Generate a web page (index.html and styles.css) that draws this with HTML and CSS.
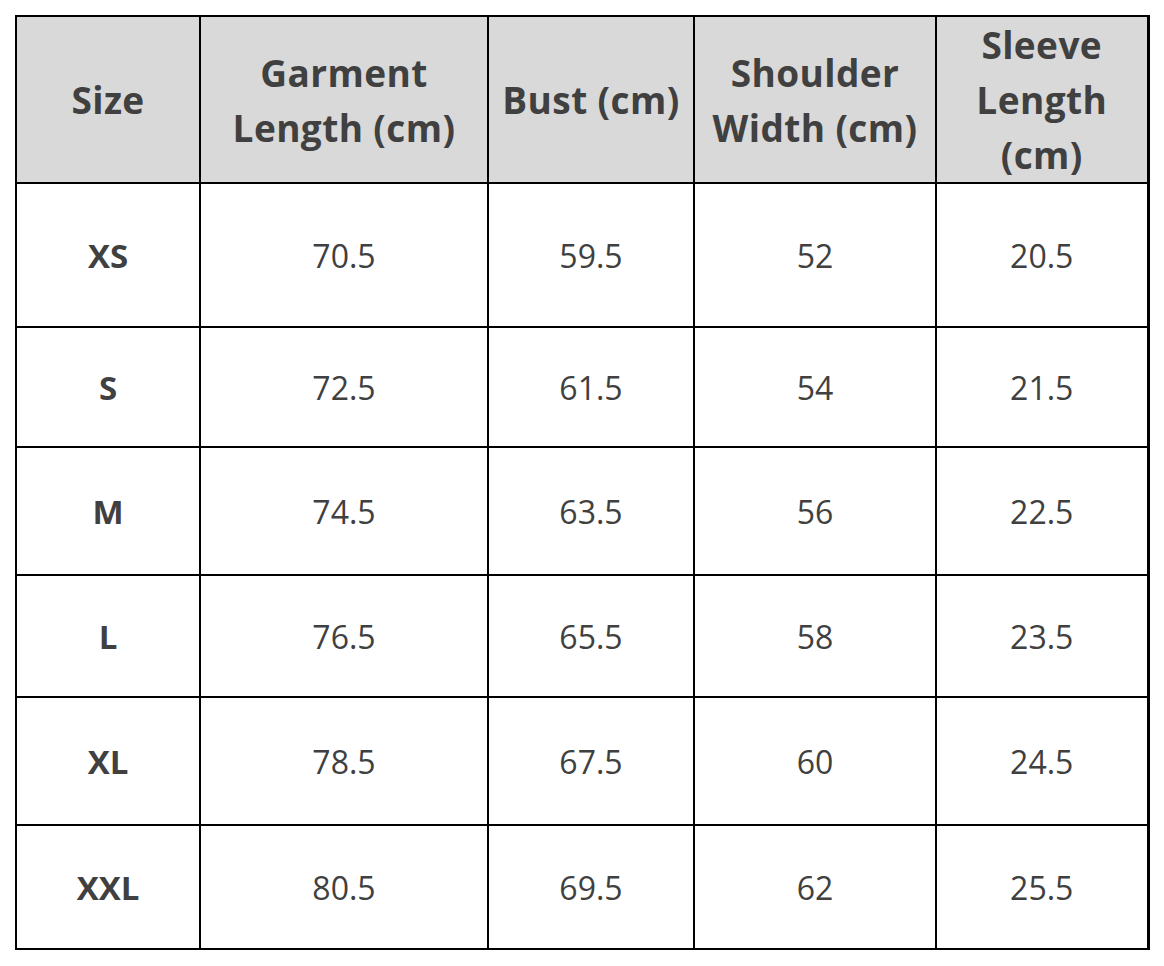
FILE: index.html
```html
<!DOCTYPE html>
<html>
<head>
<meta charset="utf-8">
<link rel="stylesheet" href="styles.css">
</head>
<body>
<table class="size-table">
  <colgroup>
    <col class="c1"><col class="c2"><col class="c3"><col class="c4"><col class="c5">
  </colgroup>
  <thead>
    <tr class="head">
      <th>Size</th>
      <th>Garment<br>Length (cm)</th>
      <th>Bust (cm)</th>
      <th>Shoulder<br>Width (cm)</th>
      <th>Sleeve<br>Length<br>(cm)</th>
    </tr>
  </thead>
  <tbody>
    <tr class="r1"><th>XS</th><td>70.5</td><td>59.5</td><td>52</td><td>20.5</td></tr>
    <tr class="r2"><th>S</th><td>72.5</td><td>61.5</td><td>54</td><td>21.5</td></tr>
    <tr class="r3"><th>M</th><td>74.5</td><td>63.5</td><td>56</td><td>22.5</td></tr>
    <tr class="r4"><th>L</th><td>76.5</td><td>65.5</td><td>58</td><td>23.5</td></tr>
    <tr class="r5"><th>XL</th><td>78.5</td><td>67.5</td><td>60</td><td>24.5</td></tr>
    <tr class="r6"><th>XXL</th><td>80.5</td><td>69.5</td><td>62</td><td>25.5</td></tr>
  </tbody>
</table>
</body>
</html>
```

FILE: styles.css
```css
html, body {
  margin: 0;
  padding: 0;
  background: #ffffff;
}
body {
  padding: 15px 0 0 15px;
  font-family: "Open Sans", "Liberation Sans", sans-serif;
  color: #404040;
}
.size-table {
  border-collapse: collapse;
  table-layout: fixed;
  width: 1132px;
  border-right: 3px solid #000;
}
.c1 { width: 184px; }
.c2 { width: 288px; }
.c3 { width: 206px; }
.c4 { width: 242px; }
.c5 { width: 212px; }
.size-table th,
.size-table td {
  border: 2px solid #000;
  text-align: center;
  vertical-align: middle;
  padding: 0;
}
.head th {
  background: #d9d9d9;
  font-size: 37px;
  font-weight: 700;
  line-height: 55px;
  letter-spacing: 0.4px;
  height: 165px;
}
tbody th {
  font-size: 33px;
  font-weight: 700;
}
tbody td {
  font-size: 32px;
  font-weight: 400;
}
.r1 > * { height: 142px; }
.r2 > * { height: 118px; }
.r3 > * { height: 126px; }
.r4 > * { height: 120px; }
.r5 > * { height: 126px; }
.r6 > * { height: 122px; }
```
